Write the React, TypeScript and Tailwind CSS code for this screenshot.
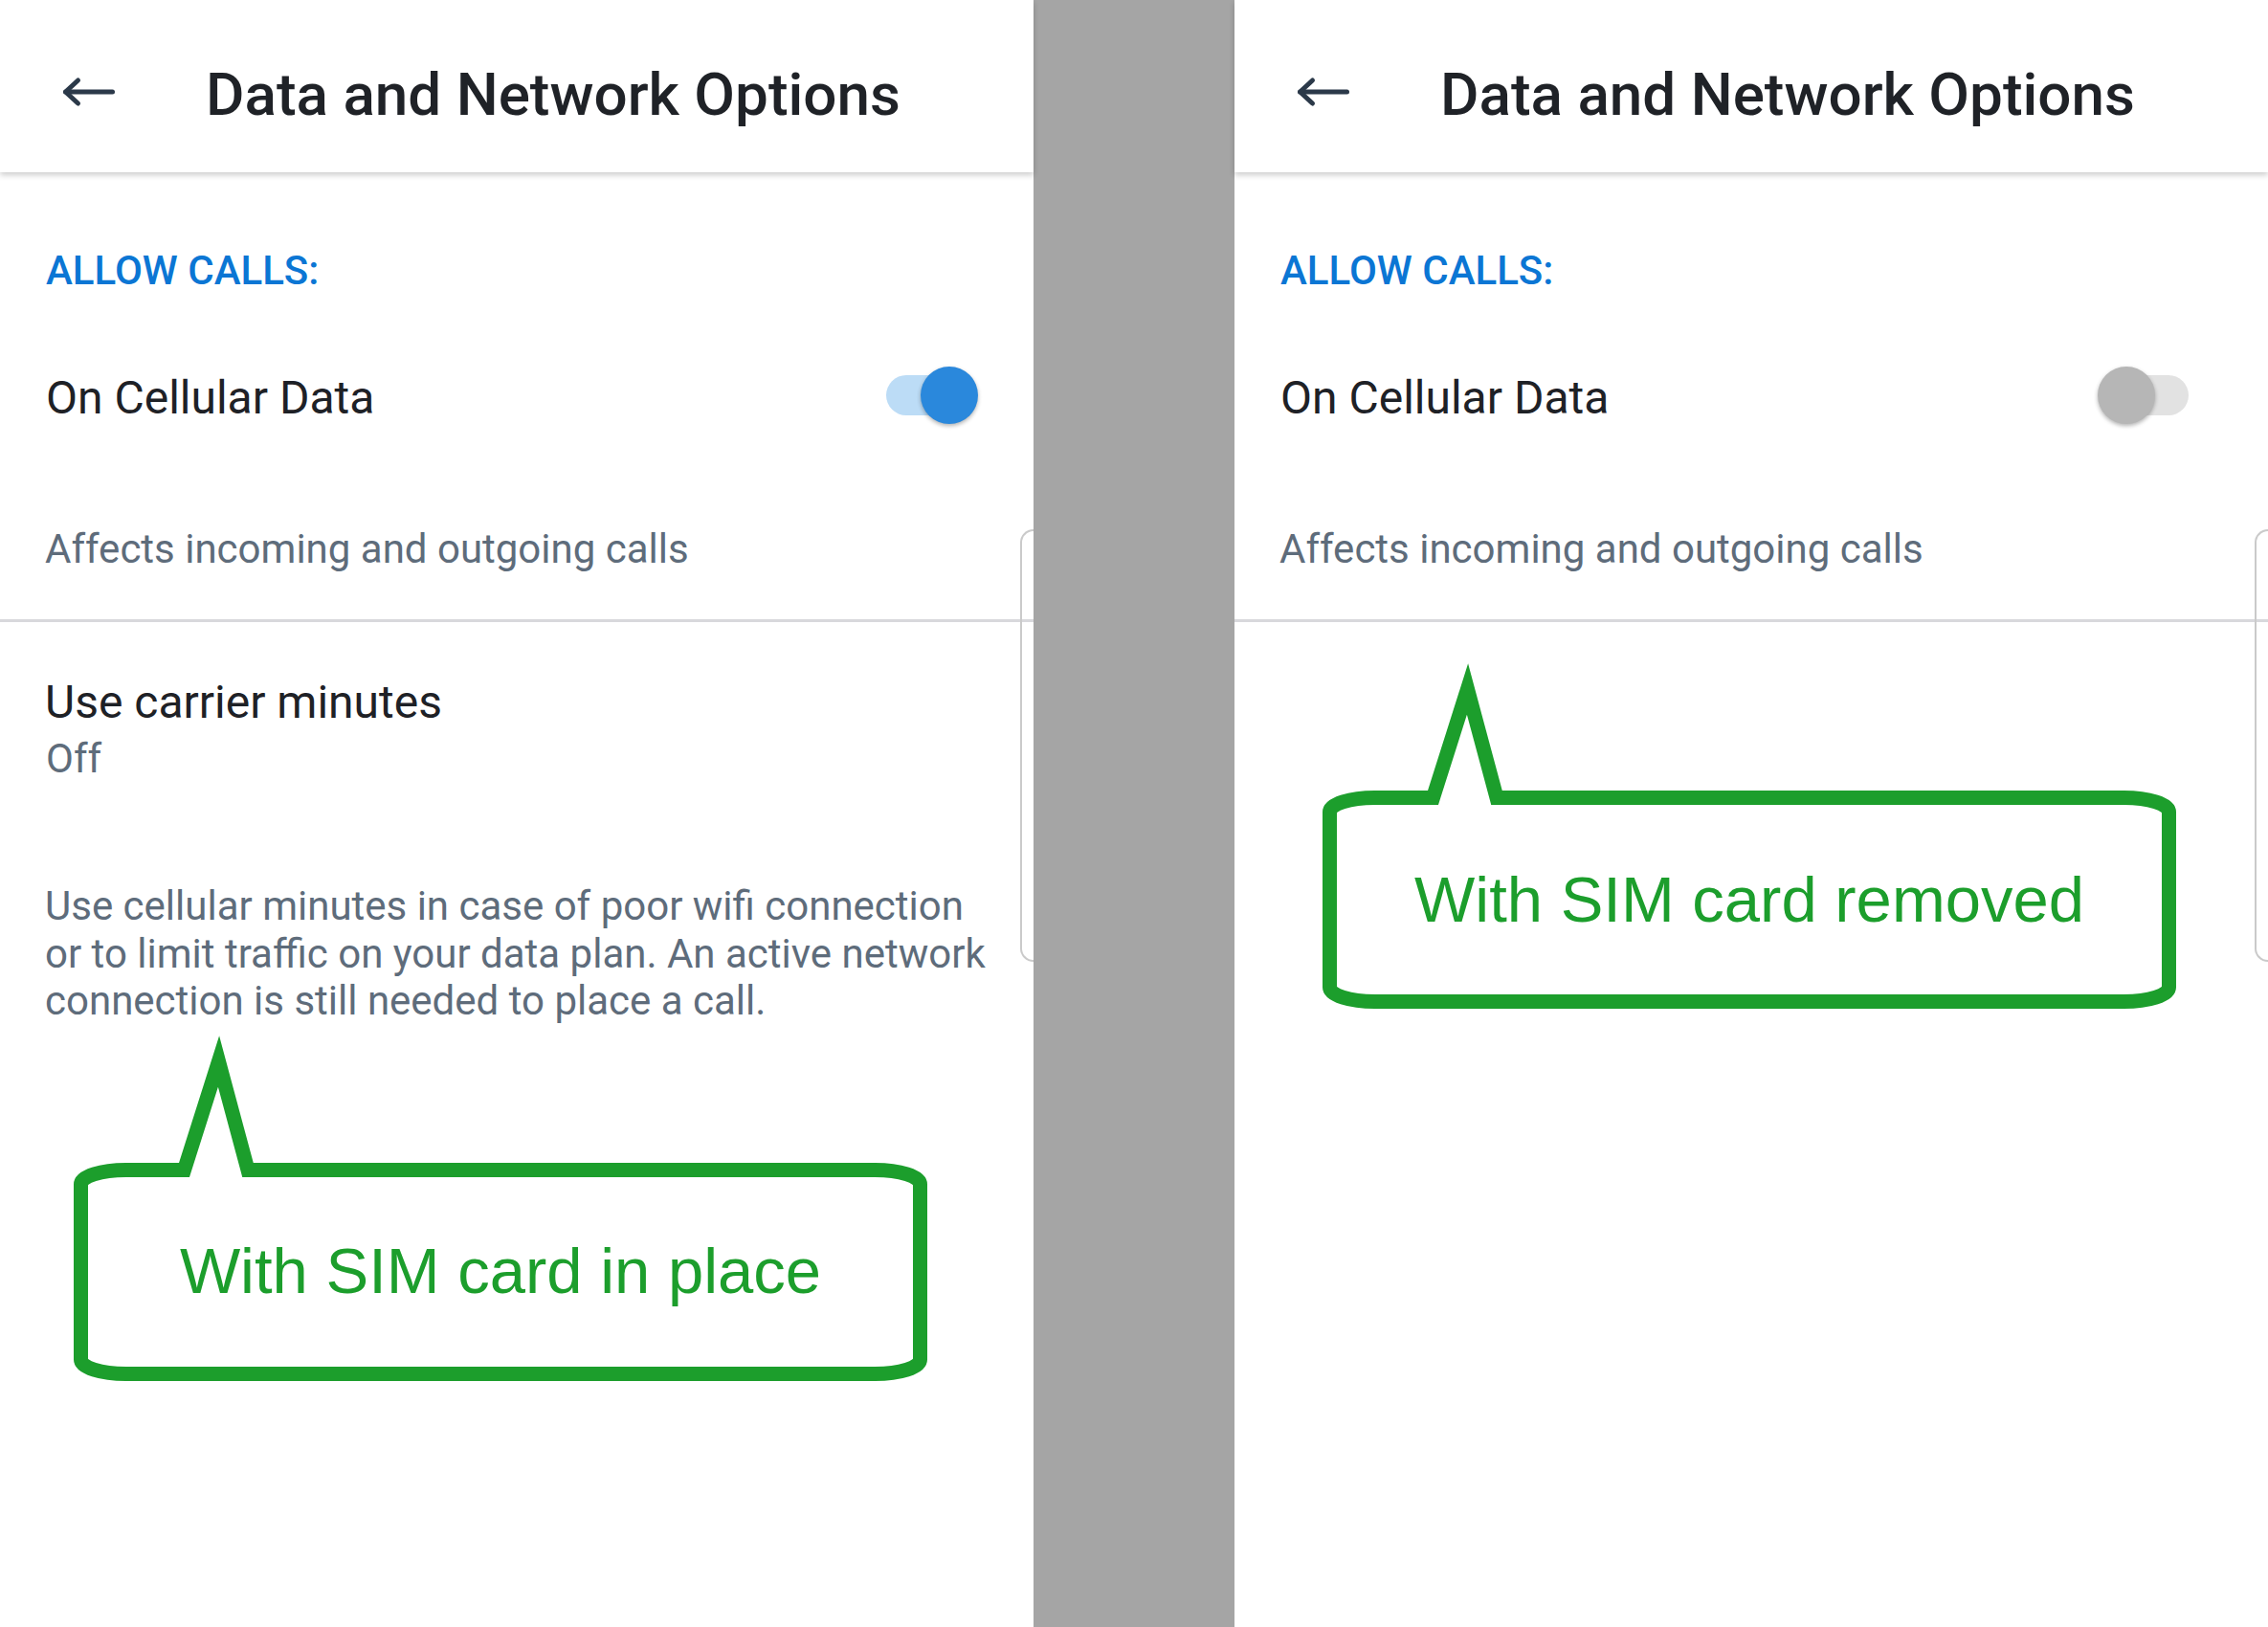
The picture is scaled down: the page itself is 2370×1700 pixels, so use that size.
import React from "react"

const roboto = "font-[Roboto,'Noto_Sans',sans-serif]"

function Header() {
  return (
    <div className="relative z-10 flex h-[180px] items-start bg-white shadow-[0_3px_6px_rgba(0,0,0,0.2)]">
      <svg
        width="58"
        height="32"
        viewBox="0 0 58 32"
        className="ml-[64px] mt-[80px] shrink-0"
        fill="none"
        stroke="#2b3949"
        strokeWidth="5"
        strokeLinecap="round"
        strokeLinejoin="round"
      >
        <path d="M4.5 16H53.5" />
        <path d="M17.5 4L4.5 16L17.5 28" />
      </svg>
      <h1 className="ml-[93px] mt-[68px] text-[62px] leading-[62px] font-medium text-[#1f2227] whitespace-nowrap">
        Data and Network Options
      </h1>
    </div>
  )
}

function Toggle({ on }: { on: boolean }) {
  return (
    <div className="relative h-[60px] w-[120px] shrink-0">
      <div
        className={`absolute left-[24px] top-[9px] h-[42px] w-[71px] rounded-full ${
          on ? "bg-[#bcdcf6]" : "bg-[#e2e2e2]"
        }`}
      />
      <div
        className={`absolute top-0 h-[60px] w-[60px] rounded-full shadow-[0_2px_4px_rgba(0,0,0,0.3)] ${
          on ? "right-0 bg-[#2a88dc]" : "left-0 bg-[#b6b6b6]"
        }`}
      />
    </div>
  )
}

function Bubble({ text }: { text: string }) {
  return (
    <div className="relative h-[372px] w-[906px]">
      <svg width="906" height="372" viewBox="0 0 906 372" className="absolute inset-0" fill="none">
        <path
          d="M122.5 145.5L158.5 32L189 145.5H844.5A47 15 0 0 1 891.5 160.5V343.5A47 15 0 0 1 844.5 358.5H61.5A47 15 0 0 1 14.5 343.5V160.5A47 15 0 0 1 61.5 145.5Z"
          stroke="#1c9e2c"
          strokeWidth="15"
          strokeMiterlimit="10"
        />
      </svg>
      <div className="absolute left-0 right-0 top-[146px] bottom-[16px] flex items-center justify-center">
        <span className="font-['Liberation_Sans',Arial,sans-serif] text-[67px] leading-[67px] text-[#1c9e2c] whitespace-nowrap">
          {text}
        </span>
      </div>
    </div>
  )
}

function Panel({ simIn }: { simIn: boolean }) {
  return (
    <div className={`relative flex w-[1080px] shrink-0 flex-col bg-white ${roboto}`}>
      <Header />

      <p className="mt-[82px] pl-[48px] text-[42px] leading-[42px] font-medium text-[#0b76d4]">
        ALLOW CALLS:
      </p>

      <div className="mt-[79px] flex h-[60px] items-center justify-between pl-[48px] pr-[58px]">
        <span className="mt-[6px] text-[48px] leading-[48px] text-[#1e2126]">On Cellular Data</span>
        <Toggle on={simIn} />
      </div>

      <p className="mt-[110px] pl-[47px] text-[42px] leading-[42px] text-[#5e6c7b]">
        Affects incoming and outgoing calls
      </p>

      <div className="mt-[52px] h-[3px] bg-[#d8d8dc]" />

      {simIn ? (
        <>
          <p className="mt-[60px] pl-[47px] text-[48px] leading-[48px] text-[#1e2126]">
            Use carrier minutes
          </p>
          <p className="mt-[14px] pl-[48px] text-[42px] leading-[42px] text-[#5e6c7b]">Off</p>
          <p className="mt-[108px] pl-[47px] pr-[40px] text-[42px] leading-[49.5px] text-[#5e6c7b]">
            Use cellular minutes in case of poor wifi connection or to limit traffic on your data
            plan. An active network connection is still needed to place a call.
          </p>
          <div className="ml-[70px] mt-[6px]">
            <Bubble text="With SIM card in place" />
          </div>
        </>
      ) : (
        <div className="ml-[85px] mt-[38px]">
          <Bubble text="With SIM card removed" />
        </div>
      )}

      {/* edge of a sheet peeking in from the right */}
      <div className="absolute right-0 top-[553px] h-[452px] w-[14px] rounded-l-[16px] border-2 border-r-0 border-[#cacaca]" />
    </div>
  )
}

export default function App() {
  return (
    <div className="flex h-[1700px] w-[2370px] overflow-hidden bg-white">
      <Panel simIn />
      <div className="w-[210px] shrink-0 bg-[#a5a5a5]" />
      <Panel simIn={false} />
    </div>
  )
}
